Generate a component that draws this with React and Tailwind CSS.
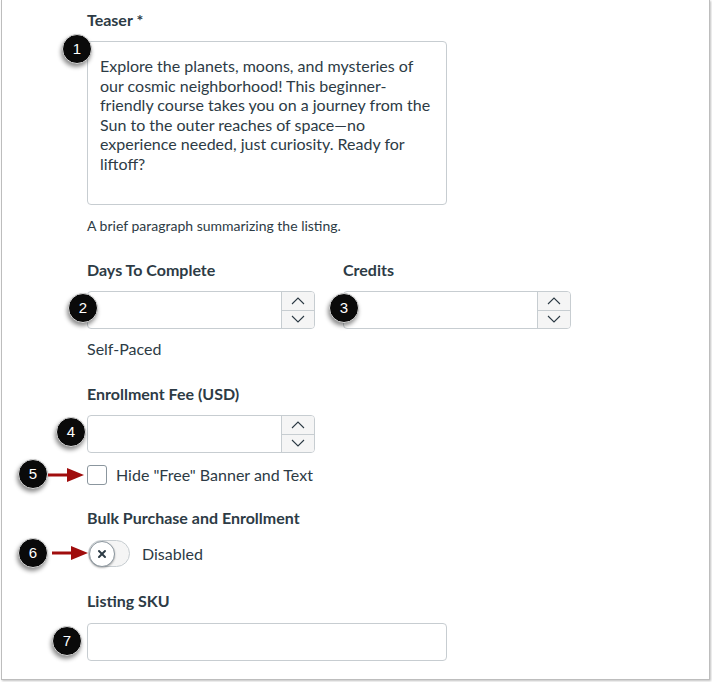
import React from "react";

const font = { fontFamily: "Lato, 'Noto Sans', sans-serif" };

function Badge({ n, className }) {
  return (
    <div
      className={`absolute w-[30px] h-[30px] rounded-full bg-[#0a0a0a] border border-[#d9d9d9] shadow-[-1px_3px_4px_rgba(0,0,0,0.45)] flex items-center justify-center text-white text-[15px] ${className}`}
      style={{ fontFamily: "'Liberation Sans', Arial, sans-serif" }}
    >
      {n}
    </div>
  );
}

function Arrow({ className }) {
  return (
    <svg className={`absolute ${className}`} width="36" height="16" viewBox="0 0 36 16">
      <line x1="0" y1="8" x2="22" y2="8" stroke="#a00d0d" strokeWidth="3" />
      <polygon points="19,1 36,8 19,15" fill="#a00d0d" />
    </svg>
  );
}

function Chevron({ up }) {
  return (
    <svg width="14" height="8" viewBox="0 0 14 8">
      <polyline
        points={up ? "1,7 7,1 13,7" : "1,1 7,7 13,1"}
        fill="none"
        stroke="#2d3b45"
        strokeWidth="1.1"
      />
    </svg>
  );
}

function NumberInput() {
  return (
    <div className="flex w-[228px] h-[38px] border border-[#c7cdd1] rounded-[4px] bg-white overflow-hidden">
      <div className="flex-1" />
      <div className="w-[33px] flex flex-col border-l border-[#c7cdd1] bg-[#f5f5f5]">
        <div className="flex-1 flex items-center justify-center border-b border-[#c7cdd1]">
          <Chevron up />
        </div>
        <div className="flex-1 flex items-center justify-center">
          <Chevron />
        </div>
      </div>
    </div>
  );
}

export default function App() {
  return (
    <div className="w-[712px] h-[682px] bg-white relative" style={font}>
      <div className="absolute left-[1px] top-0 w-[709px] h-[680px] border-x border-b border-[#bdbdbd] shadow-[1px_1px_2px_rgba(0,0,0,0.25)]" />
      <div className="relative pl-[87px] pt-[10px] text-[#2d3b45]">
        <div className="text-[16px] font-bold leading-[20px]">Teaser *</div>
        <div className="mt-[11px] w-[360px] h-[164px] border border-[#c7cdd1] rounded-[4px] pl-[12px] pr-[10px] pt-[14px] text-[16px] leading-[19.5px]">
          Explore the planets, moons, and mysteries of our cosmic neighborhood! This beginner-friendly course takes you on a journey from the Sun to the outer reaches of space—no experience needed, just curiosity. Ready for liftoff?
        </div>
        <div className="mt-[11px] text-[14px] leading-[20px]">A brief paragraph summarizing the listing.</div>

        <div className="mt-[24px] flex gap-[28px]">
          <div>
            <div className="text-[16px] font-bold leading-[20px]">Days To Complete</div>
            <div className="mt-[11px]">
              <NumberInput />
            </div>
            <div className="mt-[10px] text-[16px] leading-[20px]">Self-Paced</div>
          </div>
          <div>
            <div className="text-[16px] font-bold leading-[20px]">Credits</div>
            <div className="mt-[11px]">
              <NumberInput />
            </div>
          </div>
        </div>

        <div className="mt-[25px] text-[16px] font-bold leading-[20px]">Enrollment Fee (USD)</div>
        <div className="mt-[11px]">
          <NumberInput />
        </div>

        <div className="mt-[12px] flex items-center h-[20px]">
          <div className="w-[20px] h-[20px] border border-[#8b969e] rounded-[3px] bg-white" />
          <span className="ml-[9px] text-[16px] leading-[20px]">Hide "Free" Banner and Text</span>
        </div>

        <div className="mt-[23px] text-[16px] font-bold leading-[20px]">Bulk Purchase and Enrollment</div>
        <div className="mt-[12px] flex items-center h-[27px]">
          <div className="ml-[1px] w-[42px] h-[27px] rounded-full border border-[#c7cdd1] bg-[#f5f5f5] flex items-center">
            <div className="w-[26px] h-[26px] rounded-full bg-white border border-[#8b969e] shadow-[0_1px_2px_rgba(0,0,0,0.3)] flex items-center justify-center">
              <svg width="10" height="10" viewBox="0 0 10 10">
                <line x1="2" y1="2" x2="8" y2="8" stroke="#2d3b45" strokeWidth="2" strokeLinecap="round" />
                <line x1="8" y1="2" x2="2" y2="8" stroke="#2d3b45" strokeWidth="2" strokeLinecap="round" />
              </svg>
            </div>
          </div>
          <span className="ml-[12px] text-[16px] leading-[20px]">Disabled</span>
        </div>

        <div className="mt-[24px] text-[16px] font-bold leading-[20px]">Listing SKU</div>
        <div className="mt-[12px] w-[360px] h-[38px] border border-[#c7cdd1] rounded-[4px]" />
      </div>

      <Badge n="1" className="left-[62px] top-[34px]" />
      <Badge n="2" className="left-[68px] top-[293px]" />
      <Badge n="3" className="left-[329px] top-[293px]" />
      <Badge n="4" className="left-[56px] top-[417px]" />
      <Badge n="5" className="left-[18px] top-[459px]" />
      <Badge n="6" className="left-[18px] top-[538px]" />
      <Badge n="7" className="left-[52px] top-[626px]" />

      <Arrow className="left-[48px] top-[467px]" />
      <Arrow className="left-[52px] top-[545px]" />
    </div>
  );
}
